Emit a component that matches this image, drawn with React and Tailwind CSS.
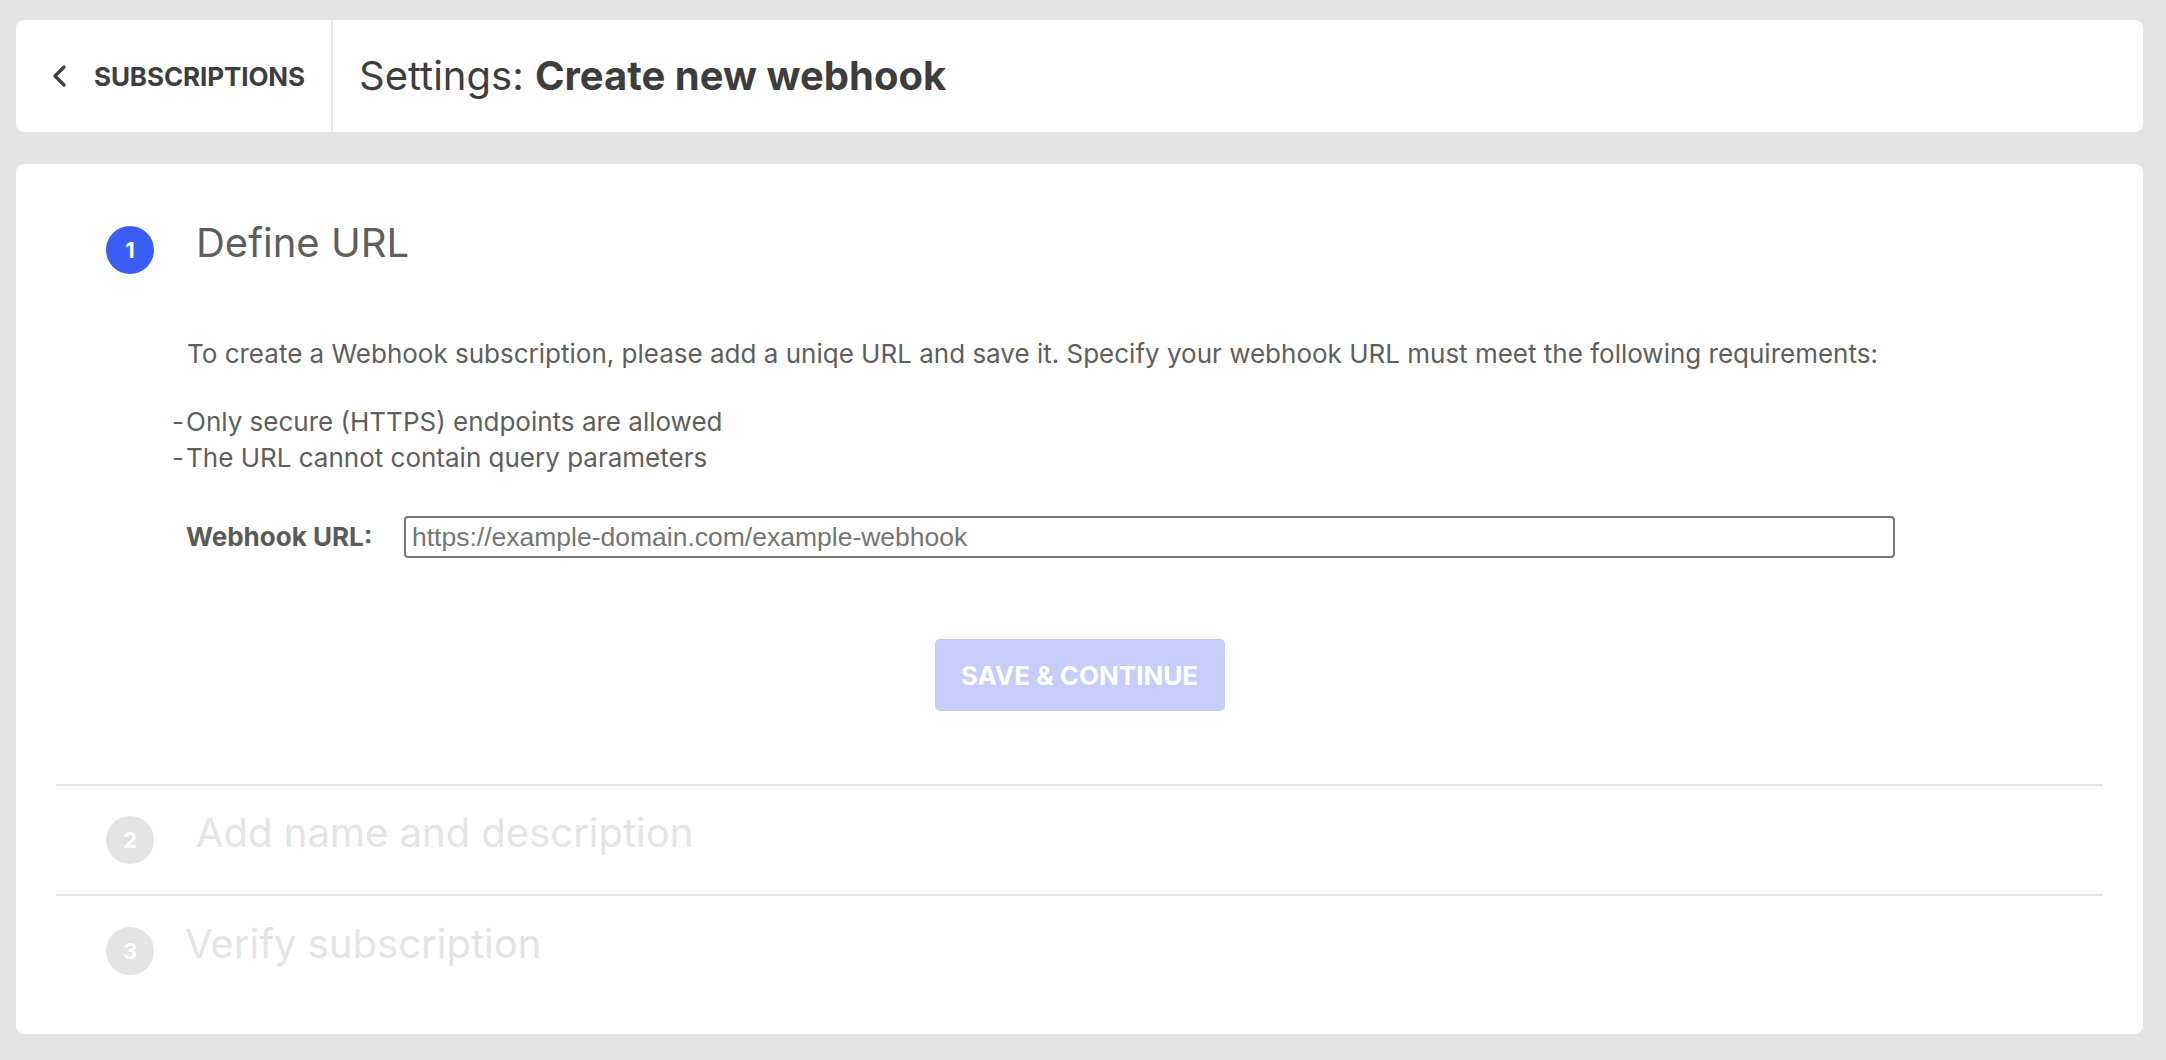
import React from "react";

function Step({ n, title, active, titleMl }) {
  return (
    <div className="flex items-start">
      <div
        className={
          "mt-[7px] ml-[50px] flex h-[48px] w-[48px] shrink-0 items-center justify-center rounded-full text-[22px] font-bold text-white " +
          (active ? "bg-[#3a5ef5]" : "bg-[#e3e3e3]")
        }
      >
        {n}
      </div>
      <div
        className={
          "text-[40px] leading-[48px] " +
          (active ? "text-[#5e5e5e]" : "text-[#e4e4e4]") +
          " " +
          titleMl
        }
      >
        {title}
      </div>
    </div>
  );
}

export default function App() {
  return (
    <div
      className="min-h-screen bg-[#e3e3e3] pl-4 pr-[23px] pt-5 pb-[25px]"
      style={{ fontFamily: "Inter, 'Noto Sans', sans-serif" }}
    >
      <header className="flex h-[112px] items-stretch rounded-lg bg-white">
        <div className="flex w-[317px] items-center border-r-2 border-[#e6e6e6] pl-[36px]">
          <svg width="16" height="22" viewBox="0 0 16 22" className="shrink-0">
            <polyline
              points="12,2 3,11 12,20"
              fill="none"
              stroke="#3d3d3d"
              strokeWidth="3.2"
              strokeLinecap="round"
              strokeLinejoin="round"
            />
          </svg>
          <span className="ml-[26px] text-[26px] font-bold uppercase tracking-[-0.1px] text-[#3d3d3d]">
            Subscriptions
          </span>
        </div>
        <div className="flex items-center pl-[26px] text-[40px] text-[#3d3d3d]">
          <span>Settings:&nbsp;</span>
          <span className="font-bold">Create new webhook</span>
        </div>
      </header>

      <main className="mt-8 rounded-lg bg-white px-10 pt-[55px] pb-[59px]">
        <section className="pb-[73px]">
          <Step n="1" title="Define URL" active titleMl="ml-[42px]" />
          <div className="mt-[62px] pl-[130px] text-[26px] leading-[36px] text-[#5e5e5e]">
            <p className="pl-[1px]">
              To create a Webhook subscription, please add a uniqe URL and save it. Specify your webhook URL must meet the following requirements:
            </p>
            <ul className="mt-8 -ml-[14px]">
              <li className="flex">
                <span className="w-[14px] shrink-0">-</span>
                <span>Only secure (HTTPS) endpoints are allowed</span>
              </li>
              <li className="flex">
                <span className="w-[14px] shrink-0">-</span>
                <span>The URL cannot contain query parameters</span>
              </li>
            </ul>
            <div className="mt-10 flex items-center">
              <label className="w-[218px] shrink-0 font-bold text-[#5a5a5a]">Webhook URL:</label>
              <input
                type="text"
                placeholder="https://example-domain.com/example-webhook"
                className="h-[42px] w-[1491px] rounded-[4px] border-2 border-[#767676] px-[6px] text-[26.5px] text-[#333] placeholder:text-[#757575] outline-none"
                style={{ fontFamily: "'Liberation Sans', Arial, sans-serif" }}
              />
            </div>
          </div>
          <div className="mt-[81px] flex justify-center">
            <button className="h-[72px] w-[290px] rounded-[5px] bg-[#c5cefa] text-[26px] font-bold uppercase text-white">
              Save &amp; Continue
            </button>
          </div>
        </section>
        <section className="border-t-2 border-[#e3e3e3] pt-[23px] pb-[30px]">
          <Step n="2" title="Add name and description" titleMl="ml-[42px]" />
        </section>
        <section className="border-t-2 border-[#e3e3e3] pt-[24px]">
          <Step n="3" title="Verify subscription" titleMl="ml-[31px]" />
        </section>
      </main>
    </div>
  );
}
